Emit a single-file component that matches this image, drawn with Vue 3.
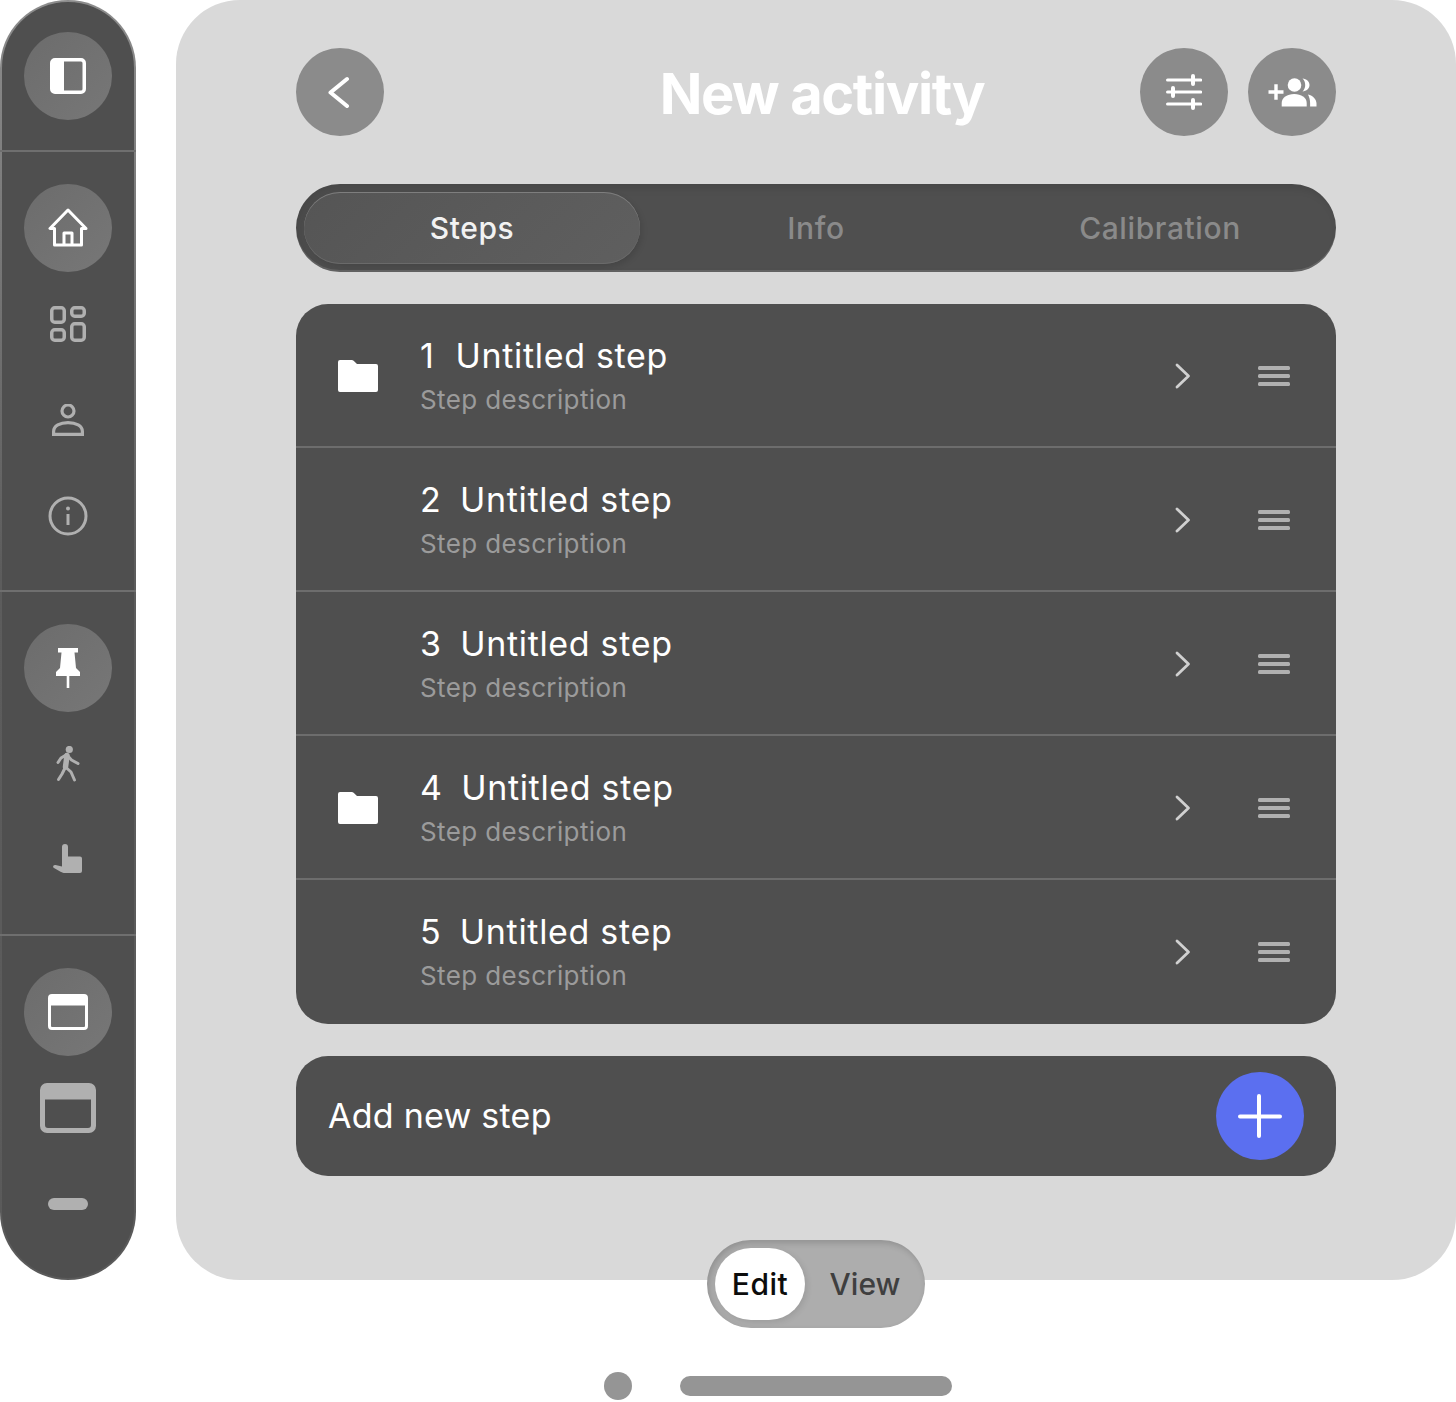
<script setup>
const steps = [
  { n: 1, folder: true },
  { n: 2, folder: false },
  { n: 3, folder: false },
  { n: 4, folder: true },
  { n: 5, folder: false },
]
</script>

<template>
  <div class="page">
    <aside class="sidebar">
      <section class="side-group first">
        <div class="side-item active">
          <svg width="36" height="36" viewBox="0 0 36 36"><path fill="#fff" fill-rule="evenodd" d="M5 0h26a5 5 0 0 1 5 5v26a5 5 0 0 1-5 5H5a5 5 0 0 1-5-5V5a5 5 0 0 1 5-5Zm9 3.500V32.500h17a1.500 1.500 0 0 0 1.500-1.500V5A1.500 1.500 0 0 0 31 3.500Z"/></svg>
        </div>
      </section>
      <section class="side-group">
        <div class="side-item active">
          <svg width="40" height="40" viewBox="0 0 40 40" fill="none" stroke="#fff" stroke-width="3" stroke-linejoin="round"><path d="M20 2 2 20.500h4.500V37h27V20.500H38Z"/><path d="M16 37V25h8v12"/></svg>
        </div>
        <div class="side-item">
          <svg width="36" height="36" viewBox="0 0 36 36" fill="none" stroke="#b0b0b0" stroke-width="3.500"><rect x="1.750" y="1.750" width="12.500" height="14.500" rx="3"/><rect x="21.750" y="1.750" width="12.500" height="8.500" rx="3"/><rect x="1.750" y="23.750" width="12.500" height="10.500" rx="3"/><rect x="21.750" y="17.750" width="12.500" height="16.500" rx="3"/></svg>
        </div>
        <div class="side-item">
          <svg width="32" height="32" viewBox="0 0 32 32" fill="none" stroke="#b0b0b0" stroke-width="3.200"><circle cx="16" cy="7" r="6"/><path d="M1.600 30.400V27.500C1.600 22 8 18.600 16 18.600S30.400 22 30.400 27.500v2.900Z"/></svg>
        </div>
        <div class="side-item">
          <svg width="40" height="40" viewBox="0 0 40 40" fill="none" stroke="#b0b0b0"><circle cx="20" cy="20" r="18" stroke-width="3"/><path d="M20 18v11" stroke-width="3"/><circle cx="20" cy="12.500" r="2" fill="#b0b0b0" stroke="none"/></svg>
        </div>
      </section>
      <section class="side-group">
        <div class="side-item active">
          <svg width="24" height="40" viewBox="0 0 24 40" fill="#fff"><path d="M2 0h20v4.500h-3.500L20 20l4 4v4H0v-4l4-4 1.500-15.500H2Z"/><path d="M10.700 28h2.600v12h-2.600Z"/></svg>
        </div>
        <div class="side-item">
          <svg width="24" height="36" viewBox="0 0 24 36" fill="none" stroke="#b0b0b0" stroke-width="3" stroke-linecap="round" stroke-linejoin="round"><circle cx="13.300" cy="3.500" r="3.600" fill="#b0b0b0" stroke="none"/><path d="M11 9.500 9.500 21" stroke-width="5.500"/><path d="M10 9 5 12l-3 4.500"/><path d="M11 9l4.500 5 6.500 3.500"/><path d="M9.500 21 6 28l-3.500 5.500"/><path d="M9.500 21l5.500 5 3.500 8"/></svg>
        </div>
        <div class="side-item">
          <svg width="30" height="32" viewBox="0 0 30 32" fill="#b0b0b0"><path d="M9 3a3 3 0 0 1 6 0v9.500h12a2 2 0 0 1 2 2V27a2 2 0 0 1-2 2H12c-1.500 0-3-.5-4-1l-7-4c-1.800-1-.6-3.500 1.500-3L9 22.500Z"/></svg>
        </div>
      </section>
      <section class="side-group last">
        <div class="side-item active">
          <svg width="40" height="36" viewBox="0 0 40 36"><path fill="#fff" fill-rule="evenodd" d="M4 0h32a4 4 0 0 1 4 4v28a4 4 0 0 1-4 4H4a4 4 0 0 1-4-4V4a4 4 0 0 1 4-4Zm-1 11.500V32a1 1 0 0 0 1 1h32a1 1 0 0 0 1-1V11.500Z"/></svg>
        </div>
        <div class="side-item">
          <svg width="56" height="50" viewBox="0 0 56 50"><path fill="#b0b0b0" fill-rule="evenodd" d="M7 0h42a7 7 0 0 1 7 7v36a7 7 0 0 1-7 7H7a7 7 0 0 1-7-7V7a7 7 0 0 1 7-7Zm-2 16.500V42a3 3 0 0 0 3 3h40a3 3 0 0 0 3-3V16.500Z"/></svg>
        </div>
        <div class="side-item">
          <span class="minimize"></span>
        </div>
      </section>
    </aside>

    <main class="panel">
      <header class="header">
        <div class="header-left">
          <button class="round">
            <svg width="24" height="36" viewBox="0 0 24 36" fill="none" stroke="#fff" stroke-width="4" stroke-linecap="round" stroke-linejoin="round"><path d="M19 5 2.500 18.500 19 32"/></svg>
          </button>
        </div>
        <h1 class="title">New activity</h1>
        <div class="header-right">
          <button class="round">
            <svg width="36" height="36" viewBox="0 0 36 36" fill="none" stroke="#fff" stroke-width="3.200" stroke-linecap="round"><path d="M1.600 6h33M1.600 18h33M1.600 30h33"/><path d="M27 2v8M7 14v8M27 26v8" stroke-width="4"/></svg>
          </button>
          <button class="round">
            <svg width="50" height="30" viewBox="0 0 50 30" fill="#fff"><path d="M7.300 7.300h3.400v6h5.800v3.400h-5.800v6H7.300v-6H1.500v-3.400h5.800Z"/><circle cx="27.500" cy="8" r="6.800"/><path d="M14.700 29.500V26c0-5.500 5.500-9 12.500-9s12.500 3.500 12.500 9v3.500Z"/><path d="M35.500 1.500c4 .4 7 3 7 6.500s-3 6-7 6.500c1.700-1.600 2.700-3.900 2.700-6.500s-1-4.900-2.700-6.500Z"/><path d="M41 17.500c5.200 1.200 8.500 5 8.500 9v3h-6.400V26c0-3.300-.8-6-2.100-8.500Z"/></svg>
          </button>
        </div>
      </header>

      <nav class="tabs">
        <div class="tab selected">Steps</div>
        <div class="tab">Info</div>
        <div class="tab">Calibration</div>
      </nav>

      <ul class="steps">
        <li v-for="s in steps" :key="s.n" class="step">
          <div class="step-icon">
            <svg v-if="s.folder" width="40" height="32" viewBox="0 0 40 32" fill="#fff"><path d="M2 0h11.500c1 0 1.800.4 2.400 1L19 4h19a2 2 0 0 1 2 2v24a2 2 0 0 1-2 2H2a2 2 0 0 1-2-2V2a2 2 0 0 1 2-2Z"/></svg>
          </div>
          <div class="step-text">
            <div class="step-title"><span class="step-num">{{ s.n }}</span>Untitled step</div>
            <div class="step-desc">Step description</div>
          </div>
          <svg class="chev" width="16" height="26" viewBox="0 0 16 26" fill="none" stroke="#d0d0d0" stroke-width="2.800" stroke-linecap="round" stroke-linejoin="round"><path d="M2 2l11.500 11L2 24"/></svg>
          <svg class="menu" width="32" height="20" viewBox="0 0 32 20" fill="#b0b0b0"><rect y="0" width="32" height="4" rx="1.500"/><rect y="8" width="32" height="4" rx="1.500"/><rect y="16" width="32" height="4" rx="1.500"/></svg>
        </li>
      </ul>

      <div class="add">
        <span class="add-label">Add new step</span>
        <button class="add-btn">
          <svg width="46" height="46" viewBox="0 0 46 46" fill="none" stroke="#fff" stroke-width="4" stroke-linecap="round"><path d="M22 3v40M3 23.500h40"/></svg>
        </button>
      </div>

      <div class="mode">
        <div class="mode-opt on">Edit</div>
        <div class="mode-opt off">View</div>
      </div>
    </main>

    <footer class="pager">
      <span class="pager-dot"></span>
      <span class="pager-bar"></span>
    </footer>
  </div>
</template>

<style>
html, body { margin: 0; background: #fff; }
</style>

<style scoped>
.page {
  display: grid;
  grid-template-columns: 136px 1280px;
  column-gap: 40px;
  width: 1456px;
  height: 1402px;
  font-family: Inter, "Liberation Sans", sans-serif;
  overflow: hidden;
}
.sidebar {
  box-sizing: border-box;
  height: 1280px;
  border-radius: 68px;
  border: 2px solid transparent;
  background:
    linear-gradient(#4f4f4f, #4f4f4f) padding-box,
    linear-gradient(180deg, #8c8c8c 0, #777 20%, #5c5c5c 45%, #5a5a5a 100%) border-box;
  display: flex;
  flex-direction: column;
  margin: 0;
}
.side-group {
  display: flex;
  flex-direction: column;
  align-items: center;
  gap: 8px;
  padding: 32px 0 30px;
  border-bottom: 2px solid #6f6f6f;
  margin: 0 -2px;
}
.side-group.first { padding-top: 30px; }
.side-group.last { border-bottom: 0; padding-bottom: 30px; }
.side-item {
  width: 88px;
  height: 88px;
  border-radius: 50%;
  display: flex;
  align-items: center;
  justify-content: center;
}
.side-item.active { background: linear-gradient(135deg, #6c6c6c, #777); }
.minimize {
  width: 40px;
  height: 12px;
  border-radius: 6px;
  background: #b0b0b0;
}

.panel {
  position: relative;
  box-sizing: border-box;
  height: 1280px;
  width: 1280px;
  padding: 48px 120px 0;
  background: #d9d9d9;
  border-radius: 64px;
}
.header {
  display: grid;
  grid-template-columns: 1fr auto 1fr;
  align-items: center;
  height: 88px;
}
.header-right {
  display: flex;
  justify-content: flex-end;
  gap: 20px;
}
.round {
  width: 88px;
  height: 88px;
  padding: 0;
  border: 0;
  border-radius: 50%;
  background: #8b8b8b;
  display: flex;
  align-items: center;
  justify-content: center;
}
.title {
  margin: 4px 0 0 12px;
  color: #fff;
  font-size: 56px;
  line-height: 68px;
  font-weight: 700;
  letter-spacing: -1.400px;
}
.tabs {
  margin-top: 48px;
  height: 88px;
  box-sizing: border-box;
  padding: 8px;
  display: grid;
  grid-template-columns: repeat(3, 336px);
  column-gap: 8px;
  border-radius: 44px;
  background: #4f4f4f;
  box-shadow: inset 4px 4px 8px rgba(0, 0, 0, 0.1), inset 0 -2px 0 rgba(255, 255, 255, 0.12);
}
.tab {
  display: flex;
  align-items: center;
  justify-content: center;
  border-radius: 36px;
  color: #8a8a8a;
  font-size: 30px;
  font-weight: 500;
  letter-spacing: 0.600px;
  padding-bottom: 1px;
  box-sizing: border-box;
}
.tab.selected {
  color: #f2f2f2;
  background: linear-gradient(135deg, #555, #5f5f5f);
  box-shadow: inset 0 1px 0 #7e7e7e, inset 0 -1px 0 #6a6a6a, 2px 3px 6px rgba(0, 0, 0, 0.12);
}
.steps {
  list-style: none;
  margin: 32px 0 0;
  padding: 0;
  background: #4f4f4f;
  border-radius: 32px;
  overflow: hidden;
}
.step {
  box-sizing: border-box;
  height: 144px;
  display: flex;
  align-items: center;
  padding: 0 46px 0 42px;
  box-shadow: inset 0 -2px 0 #6d6d6d;
}
.step:last-child { box-shadow: none; }
.step-icon {
  width: 82px;
  flex: none;
  height: 32px;
  display: flex;
}
.step-text { flex: 1; margin-top: 2px; }
.step-title {
  color: #fff;
  font-size: 34px;
  line-height: 44px;
  font-weight: 400;
  letter-spacing: 0.680px;
  display: flex;
}
.step-num { margin-right: 18.500px; }
.step:first-child .step-num { margin-right: 21px; }
.step-desc {
  color: #9b9b9b;
  font-size: 26px;
  line-height: 40px;
  letter-spacing: 0.375px;
  margin-top: 2px;
}
.chev { flex: none; margin-right: 67px; }
.menu { flex: none; }

.add {
  margin-top: 32px;
  height: 120px;
  box-sizing: border-box;
  padding: 0 32px;
  border-radius: 32px;
  background: #4f4f4f;
  color: #fff;
  font-size: 34px;
  letter-spacing: 0.250px;
  display: flex;
  align-items: center;
  justify-content: space-between;
}
.add-label { margin-top: -2px; }
.add-btn {
  width: 88px;
  height: 88px;
  padding: 0;
  border: 0;
  border-radius: 50%;
  background: #5b6ff0;
  display: flex;
  align-items: center;
  justify-content: center;
}

.mode {
  position: absolute;
  left: 531px;
  top: 1240px;
  width: 218px;
  height: 88px;
  box-sizing: border-box;
  padding: 8px;
  border-radius: 44px;
  background: #adadad;
  box-shadow: inset 2px 3px 6px rgba(0, 0, 0, 0.16);
  display: flex;
  align-items: center;
  font-size: 30px;
  font-weight: 500;
}
.mode-opt {
  height: 72px;
  display: flex;
  align-items: center;
  justify-content: center;
  border-radius: 36px;
}
.mode-opt.on {
  width: 90px;
  background: #fff;
  color: #0c0c0c;
  letter-spacing: 0.500px;
  box-shadow: 2px 2px 6px rgba(0, 0, 0, 0.1);
}
.mode-opt.off {
  width: 104px;
  margin-left: 8px;
  color: #3f3f3f;
}

.pager {
  grid-column: 1 / -1;
  position: absolute;
  left: 604px;
  top: 1372px;
  display: flex;
  align-items: center;
  gap: 48px;
}
.pager-dot {
  width: 28px;
  height: 28px;
  border-radius: 50%;
  background: #959595;
}
.pager-bar {
  width: 272px;
  height: 20px;
  border-radius: 10px;
  background: #959595;
}
</style>
